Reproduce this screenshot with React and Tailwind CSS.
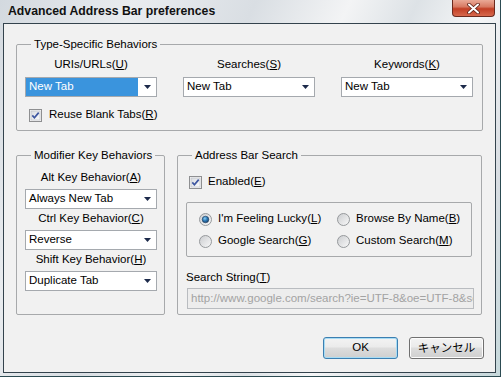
import React from 'react';

const GROUP = 'border border-[#a7a9ab] rounded-[2px]';

function Arrow() {
  return (
    <svg width="7" height="4" viewBox="0 0 7 4">
      <path d="M0 0H7L3.5 4Z" fill="#1c2a4a" />
    </svg>
  );
}

function Select({ value, active }) {
  return (
    <div className="flex h-[20px] w-[132px] items-stretch border border-[#a5a9ae] bg-white">
      <div className={`flex flex-1 items-center pl-[3px] ${active ? 'bg-[#3a94dd] text-white' : ''}`}>{value}</div>
      <div className="flex w-[18px] items-center justify-center">
        <Arrow />
      </div>
    </div>
  );
}

function CheckBox() {
  return (
    <svg width="13" height="13" viewBox="0 0 13 13" className="shrink-0">
      <defs>
        <linearGradient id="cbg" x1="0" y1="0" x2="1" y2="1">
          <stop offset="0" stopColor="#d8dbe0" />
          <stop offset="1" stopColor="#fbfbfc" />
        </linearGradient>
      </defs>
      <rect x="0.5" y="0.5" width="12" height="12" fill="#f4f4f4" stroke="#8e8f91" />
      <rect x="2" y="2" width="9" height="9" fill="url(#cbg)" stroke="#b8bcc4" strokeWidth="0.6" />
      <path d="M3.3 6.4L5.4 8.8L9.7 3.6" fill="none" stroke="#3d56a0" strokeWidth="1.7" />
    </svg>
  );
}

function Radio({ checked }) {
  return (
    <svg width="13" height="13" viewBox="0 0 13 13" className="shrink-0">
      <defs>
        <linearGradient id="rbg" x1="0" y1="0" x2="1" y2="1">
          <stop offset="0" stopColor="#c9cbce" />
          <stop offset="1" stopColor="#fafafa" />
        </linearGradient>
        <radialGradient id="rdot" cx="0.4" cy="0.35" r="0.7">
          <stop offset="0" stopColor="#8fd0f5" />
          <stop offset="0.5" stopColor="#2b79b6" />
          <stop offset="1" stopColor="#1b3f66" />
        </radialGradient>
      </defs>
      <circle cx="6.5" cy="6.5" r="6" fill="url(#rbg)" stroke="#96999c" />
      {checked && <circle cx="6.5" cy="6.5" r="3.3" fill="url(#rdot)" stroke="#1e3a5c" strokeWidth="0.6" />}
    </svg>
  );
}

function Legend({ children }) {
  return <legend className="ml-[6px] px-[3px] leading-[14px]">{children}</legend>;
}

function Button({ children, primary }) {
  return (
    <button
      className={`flex h-[22px] w-[75px] items-center justify-center rounded-[3px] border bg-[linear-gradient(to_bottom,#f3f3f3_0%,#ebebeb_45%,#dddddd_50%,#cfcfcf_100%)] ${
        primary ? 'border-[#3c7fb1] shadow-[inset_0_0_0_1px_#a8dcf4]' : 'border-[#707070] shadow-[inset_0_0_0_1px_#fcfcfc]'
      }`}
    >
      {children}
    </button>
  );
}

export default function App() {
  return (
    <div className="flex h-[377px] w-[501px] flex-col border-r border-b border-[#2c4b52] bg-[linear-gradient(115deg,#d3d9df_0%,#e9ecef_20%,#d9dee3_38%,#f3f4f5_52%,#dde2e6_62%,#f5f6f7_72%,#d8dde2_86%,#c7d9dc_100%)] pl-[3px] pr-[4px] pb-[3px] font-['Liberation_Sans',Arial,sans-serif] text-[11.5px] text-black">
      {/* title bar */}
      <div className="-ml-[3px] -mr-[4px] flex h-[23px] items-start justify-between">
        <div className="flex h-[23px] items-center pl-[8px] text-[12.25px] font-bold text-[#111]">Advanced Address Bar preferences</div>
        <div className="mr-[5px] flex h-[17px] w-[43px] items-center justify-center rounded-b-[4px] border border-t-0 border-[#6b2a1e] bg-[linear-gradient(to_bottom,#eaa996_0%,#d87a63_42%,#c23f25_55%,#d7684d_100%)]">
          <svg width="13" height="11" viewBox="0 0 13 11">
            <path d="M2 1.5L11 9.5M11 1.5L2 9.5" stroke="#5a1e14" strokeWidth="3.6" strokeLinecap="round" />
            <path d="M2 1.5L11 9.5M11 1.5L2 9.5" stroke="#ffffff" strokeWidth="2" strokeLinecap="round" />
          </svg>
        </div>
      </div>

      {/* client */}
      <div className="h-[350px] w-[493px] border border-[#34434d] bg-[#f1f1f1] pl-[12px] pt-[13px]">
        <fieldset className={`w-[467px] ${GROUP} pb-[8px] pl-[8px] pt-[6px]`}>
          <Legend>Type-Specific Behaviors</Legend>
          <div className="flex gap-x-[26px]">
            {[
              ['URIs/URLs', 'U', true],
              ['Searches', 'S', false],
              ['Keywords', 'K', false],
            ].map(([label, key, active]) => (
              <div key={label} className="flex w-[132px] flex-col">
                <div className="h-[14px] text-center leading-[14px]">
                  {label}(<u>{key}</u>)
                </div>
                <div className="mt-[6px]">
                  <Select value="New Tab" active={active} />
                </div>
              </div>
            ))}
          </div>
          <div className="ml-[4px] mt-[11px] flex h-[14px] items-center gap-[7px]">
            <CheckBox />
            <span>
              Reuse Blank Tabs(<u>R</u>)
            </span>
          </div>
        </fieldset>

        <div className="mt-[17px] flex gap-[12px]">
          <fieldset className={`w-[149px] ${GROUP} pl-[8px] pt-[7px]`}>
            <Legend>Modifier Key Behaviors</Legend>
            {[
              ['Alt Key Behavior', 'A', 'Always New Tab'],
              ['Ctrl Key Behavior', 'C', 'Reverse'],
              ['Shift Key Behavior', 'H', 'Duplicate Tab'],
            ].map(([label, key, value], i) => (
              <div key={label} className={i > 0 ? 'mt-[1px]' : ''}>
                <div className="h-[16px] w-[132px] text-center leading-[16px]">
                  {label}(<u>{key}</u>)
                </div>
                <div className="mt-[4px]">
                  <Select value={value} />
                </div>
              </div>
            ))}
          </fieldset>

          <fieldset className={`w-[305px] ${GROUP} pb-[5px] pl-[8px] pt-[13px]`}>
            <Legend>Address Bar Search</Legend>
            <div className="ml-[3px] flex h-[14px] items-center gap-[6px]">
              <CheckBox />
              <span>
                Enabled(<u>E</u>)
              </span>
            </div>
            <div className={`mt-[13px] w-[286px] ${GROUP} pb-[8px] pl-[12px] pt-[9px]`}>
              <div className="grid grid-cols-[138px_auto] gap-y-[8px]">
                {[
                  ["I'm Feeling Lucky", 'L', true],
                  ['Browse By Name', 'B', false],
                  ['Google Search', 'G', false],
                  ['Custom Search', 'M', false],
                ].map(([label, key, checked]) => (
                  <div key={label} className="flex h-[14px] items-center gap-[6px]">
                    <Radio checked={checked} />
                    <span>
                      {label}(<u>{key}</u>)
                    </span>
                  </div>
                ))}
              </div>
            </div>
            <div className="mt-[13px] h-[14px] leading-[14px]">
              Search String(<u>T</u>)
            </div>
            <div className="ml-[1px] mt-[4px] flex h-[21px] w-[287px] items-center overflow-hidden whitespace-nowrap border border-[#b9bcc0] bg-[#ededed] pl-[3px] text-[#a3a3a3]">
              http://www.google.com/search?ie=UTF-8&amp;oe=UTF-8&amp;sourceid=navclient&amp;gfns=1&amp;q=%s
            </div>
          </fieldset>
        </div>

        <div className="mt-[22px] flex justify-end gap-[11px] pr-[11px]">
          <Button primary>OK</Button>
          <Button>
            <span className="font-['Noto_Sans_CJK_JP','Liberation_Sans',sans-serif] text-[11.5px]">キャンセル</span>
          </Button>
        </div>
      </div>
    </div>
  );
}
